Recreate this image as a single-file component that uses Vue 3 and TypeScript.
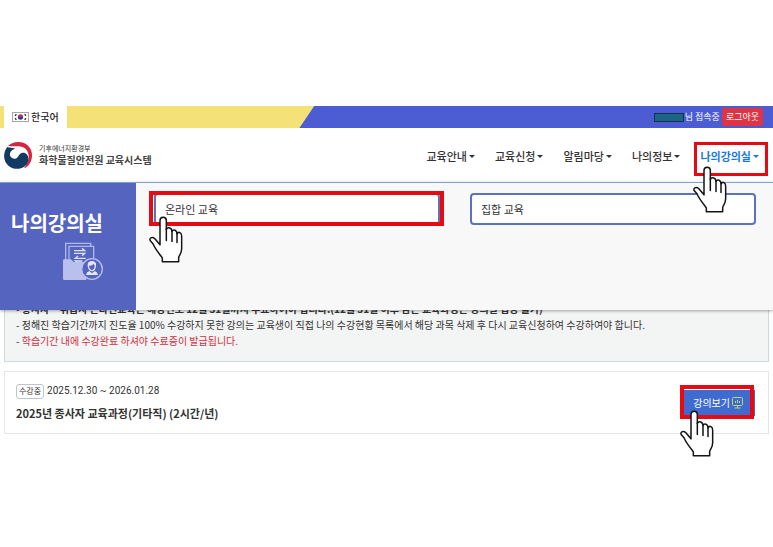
<script setup lang="ts">
import { defineComponent, h } from 'vue'

interface MenuItem {
  label: string
  active?: boolean
}

const menu: MenuItem[] = [
  { label: '교육안내' },
  { label: '교육신청' },
  { label: '알림마당' },
  { label: '나의정보' },
  { label: '나의강의실', active: true },
]

const submenu: MenuItem[] = [{ label: '온라인 교육', active: true }, { label: '집합 교육' }]

const HandPointer = defineComponent({
  render: () =>
    h('svg', { viewBox: '0 0 102 140', width: 34, height: 47, 'aria-hidden': 'true' }, [
      h('path', {
        d: 'M33 86V13C33 0 52 0 52 13V40C55 32 69 34 69 46C73 38 84 42 84 53C89 45 98 49 98 60V98C98 112 91 116 89 124V137H40V125C30 112 18 98 12 83L4 74C-1 66 9 61 17 67L33 86Z',
        fill: '#fff',
        stroke: '#151515',
        'stroke-width': 4.5,
        'stroke-linejoin': 'round',
      }),
      h('path', {
        d: 'M52 38V73M69 46V76M84 53V79',
        fill: 'none',
        stroke: '#151515',
        'stroke-width': 4.5,
        'stroke-linecap': 'round',
      }),
    ]),
})
</script>

<template>
  <div class="page">
    <div class="topbar">
      <a class="lang" href="#">
        <svg width="17" height="10" viewBox="0 0 17 10" aria-hidden="true">
          <rect x=".5" y=".5" width="16" height="9" fill="#fff" stroke="#a5a5ab" />
          <path d="M5.8 5a2.7 2.7 0 0 1 5.4 0z" fill="#c8304a" />
          <path d="M5.8 5a2.7 2.7 0 0 0 5.4 0z" fill="#2b3f9b" />
          <path d="M3 3.8l1.4-1.6M3 6.2l1.4 1.6M14 3.8l-1.4-1.6M14 6.2l-1.4 1.6" stroke="#333" stroke-width="1.3" />
        </svg>
        <span>한국어</span>
      </a>
      <div class="account">
        <span class="mask"></span>
        <span>님 접속중</span>
        <button type="button" class="logout">로그아웃</button>
      </div>
    </div>

    <header class="header">
      <a class="brand" href="#">
        <svg width="28" height="28" viewBox="0 0 84 84" aria-hidden="true">
          <path d="M12 15C36-9 85 3 84 44C83 64 73 77 60 82C74 64 80 42 67 26C54 11 34 18 12 15Z" fill="#d5243f" />
          <path d="M10 18C-4 35-3 61 14 75C36 92 70 82 73 57C75 42 64 32 53 36C42 40 44 52 33 53C20 54 14 42 20 32C23 27 28 24 34 23C25 20 17 20 10 18Z" fill="#123a63" />
        </svg>
        <span class="brand-text">
          <small>기후에너지환경부</small>
          <strong>화학물질안전원 교육시스템</strong>
        </span>
      </a>
      <nav class="nav">
        <a v-for="item in menu" :key="item.label" href="#" :class="{ active: item.active }">
          {{ item.label }}<i class="caret"></i>
          <span v-if="item.active" class="mark mark-nav"><HandPointer class="hand" /></span>
        </a>
      </nav>

      <section class="mega">
        <div class="mega-title">
          <h2>나의강의실</h2>
          <svg width="40" height="40" viewBox="0 0 120 120" aria-hidden="true">
            <g fill="none" stroke="#aeb6ea" stroke-width="4">
              <path d="M8 58V4H83V12M18 58V13H92V48" />
              <path d="M33 26H65L57 19M33 34H65L57 41M68 49H37L45 42M58 57H37L45 64" stroke="#dfe2fa" />
            </g>
            <path d="M0 56Q0 52 4 52H24L32 60H70V114H4Q0 114 0 110Z" fill="#b9c0ee" />
            <circle cx="87" cy="81" r="31" fill="#5564be" stroke="#b9c0ee" stroke-width="4" />
            <path d="M76 72Q74 60 87 59Q99 60 97 72Q96 86 86 86Q78 85 76 72Z" fill="none" stroke="#e4e7fb" stroke-width="4" />
            <path d="M75 71Q88 73 91 66L97 71V62Q87 53 76 62Z" fill="#e4e7fb" />
            <path d="M69 99Q70 90 79 87L87 94L95 87Q104 90 105 99Z" fill="#e4e7fb" />
          </svg>
        </div>
        <div class="mega-links">
          <a v-for="item in submenu" :key="item.label" href="#">
            {{ item.label }}
            <span v-if="item.active" class="mark mark-link"><HandPointer class="hand" /></span>
          </a>
        </div>
      </section>
    </header>

    <main class="content">
      <ul class="notice">
        <li><b>종사자 · 취급자 온라인교육은 해당연도 12월 31일까지 수료하여야 합니다.(12월 31일 이후 남은 교육과정은 강의실 입장 불가)</b></li>
        <li>정해진 학습기간까지 진도율 100% 수강하지 못한 강의는 교육생이 직접 나의 수강현황 목록에서 해당 과목 삭제 후 다시 교육신청하여 수강하여야 합니다.</li>
        <li class="warn">학습기간 내에 수강완료 하셔야 수료증이 발급됩니다.</li>
      </ul>

      <article class="course">
        <div>
          <p class="period"><span class="tag">수강중</span>2025.12.30 ~ 2026.01.28</p>
          <h3>2025년 종사자 교육과정(기타직) (2시간/년)</h3>
        </div>
        <button type="button" class="view">
          강의보기
          <svg width="11" height="12" viewBox="0 0 11 12" fill="none" stroke="#b9d86b" aria-hidden="true">
            <rect x=".5" y=".5" width="10" height="8" rx="1" />
            <path d="M3.5 4v2M5.5 3v3M7.5 4v2M5.5 9v2M2.5 11h6" />
          </svg>
          <span class="mark mark-view"><HandPointer class="hand" /></span>
        </button>
      </article>
    </main>
  </div>
</template>

<style>
body {
  background: #fff;
}
</style>

<style scoped>
.page {
  box-sizing: border-box;
  min-height: 100vh;
  padding: 106px 0 40px;
  font-family: 'Noto Sans CJK KR', sans-serif;
  font-size: 10px;
  line-height: 16px;
  color: #333;
}
a {
  color: inherit;
  text-decoration: none;
}
button {
  border: 0;
  color: #fff;
  font-family: inherit;
  cursor: pointer;
}
h2,
h3,
p,
ul {
  margin: 0;
  padding: 0;
}
.topbar {
  display: flex;
  justify-content: space-between;
  height: 22px;
  padding: 0 10px 0 4px;
  background: linear-gradient(124deg, #f4e178 0 260px, #4c5dd3 261px);
}
.lang {
  display: flex;
  align-items: center;
  gap: 2px;
  padding: 0 8px;
  background: #fff;
  font-weight: 500;
  color: #222;
}
.account {
  display: flex;
  align-items: center;
  gap: 1px;
  font-size: 9px;
  color: #fff;
}
.mask {
  width: 28px;
  height: 7px;
  border: 1px solid #17304f;
  background: #1a6684;
}
.logout {
  margin-left: 1px;
  padding: 0 4px;
  border-radius: 2px;
  background: #dc3545;
  font-size: 9px;
  line-height: 18px;
}
.header {
  position: relative;
  z-index: 2;
  display: flex;
  align-items: center;
  justify-content: space-between;
  height: 54px;
  padding: 0 14px 0 4px;
}
.brand,
.nav {
  display: flex;
}
.brand {
  align-items: center;
  gap: 7px;
}
.brand-text {
  display: flex;
  flex-direction: column;
}
.brand small {
  font-size: 7px;
  line-height: 10px;
}
.brand strong {
  font-size: 10px;
  line-height: 14px;
  font-weight: 700;
  color: #444;
}
.nav {
  position: relative;
  z-index: 1;
  gap: 20px;
  padding-top: 2px;
  font-size: 11px;
  font-weight: 500;
}
.nav a {
  position: relative;
  display: flex;
  align-items: center;
  gap: 2px;
}
.nav .active {
  font-weight: 700;
  color: #1878dc;
}
.caret {
  border: 3px solid transparent;
  border-top-color: currentColor;
  border-bottom-width: 0;
}
.mark {
  position: absolute;
  border: 4px solid #e60b12;
  pointer-events: none;
}
.mark-nav {
  inset: -6px -9px -12px -6px;
  border-width: 3px;
}
.mark-link {
  inset: -4px -6px -3px -7px;
}
.mark-view {
  inset: -5px 1px -3px -3px;
}
.hand {
  position: absolute;
  top: 21px;
  left: -4px;
}
.mega {
  position: absolute;
  top: 100%;
  left: 0;
  right: 0;
  display: flex;
  min-height: 127px;
  border-top: 1px solid #7fa3cd;
  background: #f8f8f8;
  box-shadow: 0 1px 3px rgb(0 0 0 / 35%);
}
.mega-title {
  display: flex;
  flex-direction: column;
  align-items: flex-end;
  gap: 4px;
  width: 92px;
  padding: 25px 33px 0 11px;
  background: #5564be;
  color: #fff;
}
.mega-title h2 {
  font-size: 20px;
  line-height: 30px;
  font-weight: 700;
  white-space: nowrap;
}
.mega-links {
  flex: 1;
  display: grid;
  grid-template-columns: 1fr 1fr;
  align-items: start;
  gap: 30px;
  padding: 10px 17px 10px 18px;
}
.mega-links a {
  position: relative;
  padding: 0 9px;
  border: 2px solid #5b72bd;
  border-radius: 4px;
  background: #fff;
  font-size: 11px;
  line-height: 28px;
}
.content {
  display: grid;
  gap: 9px;
  padding: 109px 4px 0;
}
.notice {
  padding: 9px 11px 12px;
  border: 1px solid #c9d9dc;
  background: #f3f4f4;
  list-style: none;
  white-space: nowrap;
}
.notice li::before {
  content: '- ';
  color: #333;
}
.notice .warn {
  color: #d22f43;
}
.course {
  display: flex;
  align-items: center;
  justify-content: space-between;
  padding: 11px 13px 10px 11px;
  border: 1px solid #e6e6e6;
}
.period {
  display: flex;
  align-items: center;
  gap: 3px;
  font-family: Roboto, 'Noto Sans CJK KR', sans-serif;
}
.tag {
  padding: 0 2px;
  border: 1px solid #b9c6d6;
  border-radius: 3px;
  font-size: 8px;
  line-height: 13px;
}
.course h3 {
  padding-top: 4px;
  font-size: 11px;
  line-height: 20px;
  font-weight: 700;
}
.view {
  position: relative;
  display: flex;
  align-items: center;
  gap: 2px;
  padding: 0 12px 0 10px;
  background: #3f6bd0;
  font-size: 10px;
  line-height: 26px;
}
</style>
